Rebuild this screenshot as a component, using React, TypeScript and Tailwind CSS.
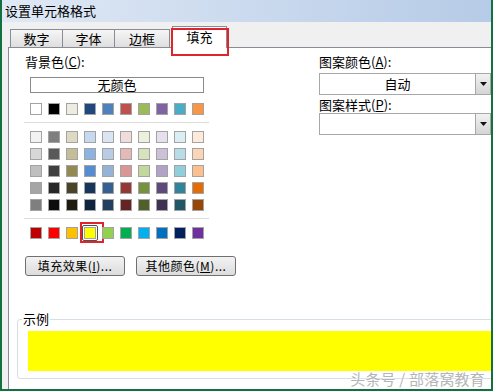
import React from "react";

const FONT = { fontFamily: '"Noto Sans CJK SC", "Noto Sans", sans-serif' };

const themeRow = ["#FFFFFF", "#000000", "#EEECE1", "#1F497D", "#4F81BD", "#C0504D", "#9BBB59", "#8064A2", "#4BACC6", "#F79646"];
const tintRows = [
  ["#F2F2F2", "#7F7F7F", "#DDD9C3", "#C6D9F0", "#DBE5F1", "#F2DCDB", "#EBF1DD", "#E5E0EC", "#DBEEF3", "#FDEADA"],
  ["#D8D8D8", "#595959", "#C4BD97", "#8DB3E2", "#B8CCE4", "#E5B9B7", "#D7E3BC", "#CCC1D9", "#B7DDE8", "#FBD5B5"],
  ["#BFBFBF", "#3F3F3F", "#938953", "#548DD4", "#95B3D7", "#D99694", "#C3D69B", "#B2A2C7", "#92CDDC", "#FAC08F"],
  ["#A5A5A5", "#262626", "#494429", "#17365D", "#366092", "#953734", "#76923C", "#5F497A", "#31859B", "#E36C09"],
  ["#7F7F7F", "#0C0C0C", "#1D1B10", "#0F243E", "#244061", "#632423", "#4F6128", "#3F3151", "#205867", "#974806"],
];
const standardRow = ["#C00000", "#FF0000", "#FFC000", "#FFFF00", "#92D050", "#00B050", "#00B0F0", "#0070C0", "#002060", "#7030A0"];

function Swatch({ color, selected }: { color: string; selected?: boolean }) {
  return (
    <div className="relative w-[12px] h-[12px]">
      <div className="w-full h-full border border-[#a3a3a3]" style={{ backgroundColor: color }} />
      {selected && (
        <>
          <div className="absolute -inset-[2px] border border-[#505050] rounded-[2px]" />
          <div className="absolute -left-[4px] -top-[5px] w-[24px] h-[21px] border-2 border-[#e0242b]" />
        </>
      )}
    </div>
  );
}

function SwatchRow({ colors, selectedIndex }: { colors: string[]; selectedIndex?: number }) {
  return (
    <div className="flex gap-[6px] ml-[5px]">
      {colors.map((c, i) => (
        <Swatch key={i} color={c} selected={i === selectedIndex} />
      ))}
    </div>
  );
}

function Tab({ label, active, wide }: { label: string; active?: boolean; wide?: boolean }) {
  if (active) {
    return (
      <div className="relative ml-[2px] -mb-px w-[55px] h-[22px] bg-white border border-b-0 border-[#898c95] flex justify-center pt-[1px] text-[13px] leading-[18px] z-10">
        {label}
        <div className="absolute -left-[2px] top-[1px] w-[58px] h-[28px] border-2 border-[#e0242b]" />
      </div>
    );
  }
  return (
    <div
      className={`${wide ? "w-[56px]" : "w-[53px]"} h-[18px] -ml-px first:ml-0 border border-b-0 border-[#898c95] bg-gradient-to-b from-[#f6f6f6] to-[#dedede] flex items-center justify-center text-[13px] leading-[16px]`}
    >
      {label}
    </div>
  );
}

function Combo({ value }: { value?: string }) {
  return (
    <div className="flex w-[172px] h-[22px] border border-[#a7a7a7] bg-white">
      <div className="flex-1 flex items-center justify-center text-[13px] leading-[16px]">{value}</div>
      <div className="w-[15px] h-full border-l border-[#a7a7a7] bg-gradient-to-b from-[#f2f2f2] to-[#d4d4d4] flex items-center justify-center">
        <svg width="7" height="4" viewBox="0 0 7 4">
          <path d="M0 0H7L3.5 4Z" fill="#111" />
        </svg>
      </div>
    </div>
  );
}

function Button({ children }: { children: React.ReactNode }) {
  return (
    <div className="w-[100px] h-[20px] rounded-[3px] border border-[#707070] bg-gradient-to-b from-[#f3f3f3] to-[#dcdcdc] flex items-center justify-center text-[12px] leading-[16px] tracking-[0.5px]">
      {children}
    </div>
  );
}

export default function App() {
  return (
    <div
      className="relative w-[493px] h-[391px] overflow-hidden flex flex-col bg-[#f0f0f0] border-x-2 border-b-2 border-[#13703f] text-black"
      style={FONT}
    >
      {/* Title bar */}
      <div className="h-[22px] flex items-center pl-[3px] text-[13px] bg-gradient-to-r from-[#e0e9f5] to-[#b6cbe7]">
        设置单元格格式
      </div>

      {/* Tabs */}
      <div className="h-[26px] ml-[6px] pl-[2px] flex items-end border-b border-[#898c95]">
        <Tab label="数字" />
        <Tab label="字体" />
        <Tab label="边框" wide />
        <Tab label="填充" active />
      </div>

      {/* Panel */}
      <div className="flex-1 ml-[6px] border-l border-[#898c95] bg-white flex flex-col">
        <div className="flex">
          {/* Background colour */}
          <div className="w-[313px] pl-[16px] flex flex-col">
            <div className="mt-[7px] text-[13px] leading-[14px]">
              背景色(<span className="underline">C</span>):
            </div>
            <div className="mt-[8px] ml-[5px] w-[174px] h-[16px] border border-[#8a8a8a] flex items-center justify-center text-[13px] leading-[14px]">
              无颜色
            </div>
            <div className="mt-[10px]">
              <SwatchRow colors={themeRow} />
            </div>
            <div className="mt-[7px] -ml-[1px] w-[185px] h-px bg-[#dcdcdc]" />
            <div className="mt-[8px] flex flex-col gap-[5px]">
              {tintRows.map((row, i) => (
                <SwatchRow key={i} colors={row} />
              ))}
            </div>
            <div className="mt-[7px] -ml-[1px] w-[185px] h-px bg-[#dcdcdc]" />
            <div className="mt-[8px]">
              <SwatchRow colors={standardRow} selectedIndex={3} />
            </div>
            <div className="mt-[17px] flex gap-[11px]">
              <Button>
                填充效果(<span className="underline">I</span>)...
              </Button>
              <Button>
                其他颜色(<span className="underline">M</span>)...
              </Button>
            </div>
          </div>

          {/* Pattern */}
          <div className="flex-1 flex flex-col">
            <div className="mt-[6px] text-[13px] leading-[15px]">
              图案颜色(<span className="underline">A</span>):
            </div>
            <div className="mt-[4px]">
              <Combo value="自动" />
            </div>
            <div className="mt-[2px] text-[13px] leading-[15px]">
              图案样式(<span className="underline">P</span>):
            </div>
            <div className="mt-[1px]">
              <Combo />
            </div>
          </div>
        </div>

        {/* Sample */}
        <div className="relative mt-[43px] ml-[8px] w-[490px] h-[60px] border border-[#d5dfe5] rounded-[3px]">
          <div className="absolute -top-[9px] left-[4px] bg-white px-[1px] text-[13px] leading-[16px]">示例</div>
          <div className="mt-[11px] ml-[10px] h-[40px] bg-[#ffff00]" />
        </div>
      </div>

      {/* Watermark */}
      <div
        className="absolute right-[6px] bottom-[2px] text-[15px] leading-[17px] text-[#b5b5b5] tracking-[0.2px]"
        style={{ textShadow: "0 0 2px #fff, 0 0 2px #fff" }}
      >
        头条号 / 部落窝教育
      </div>
    </div>
  );
}
